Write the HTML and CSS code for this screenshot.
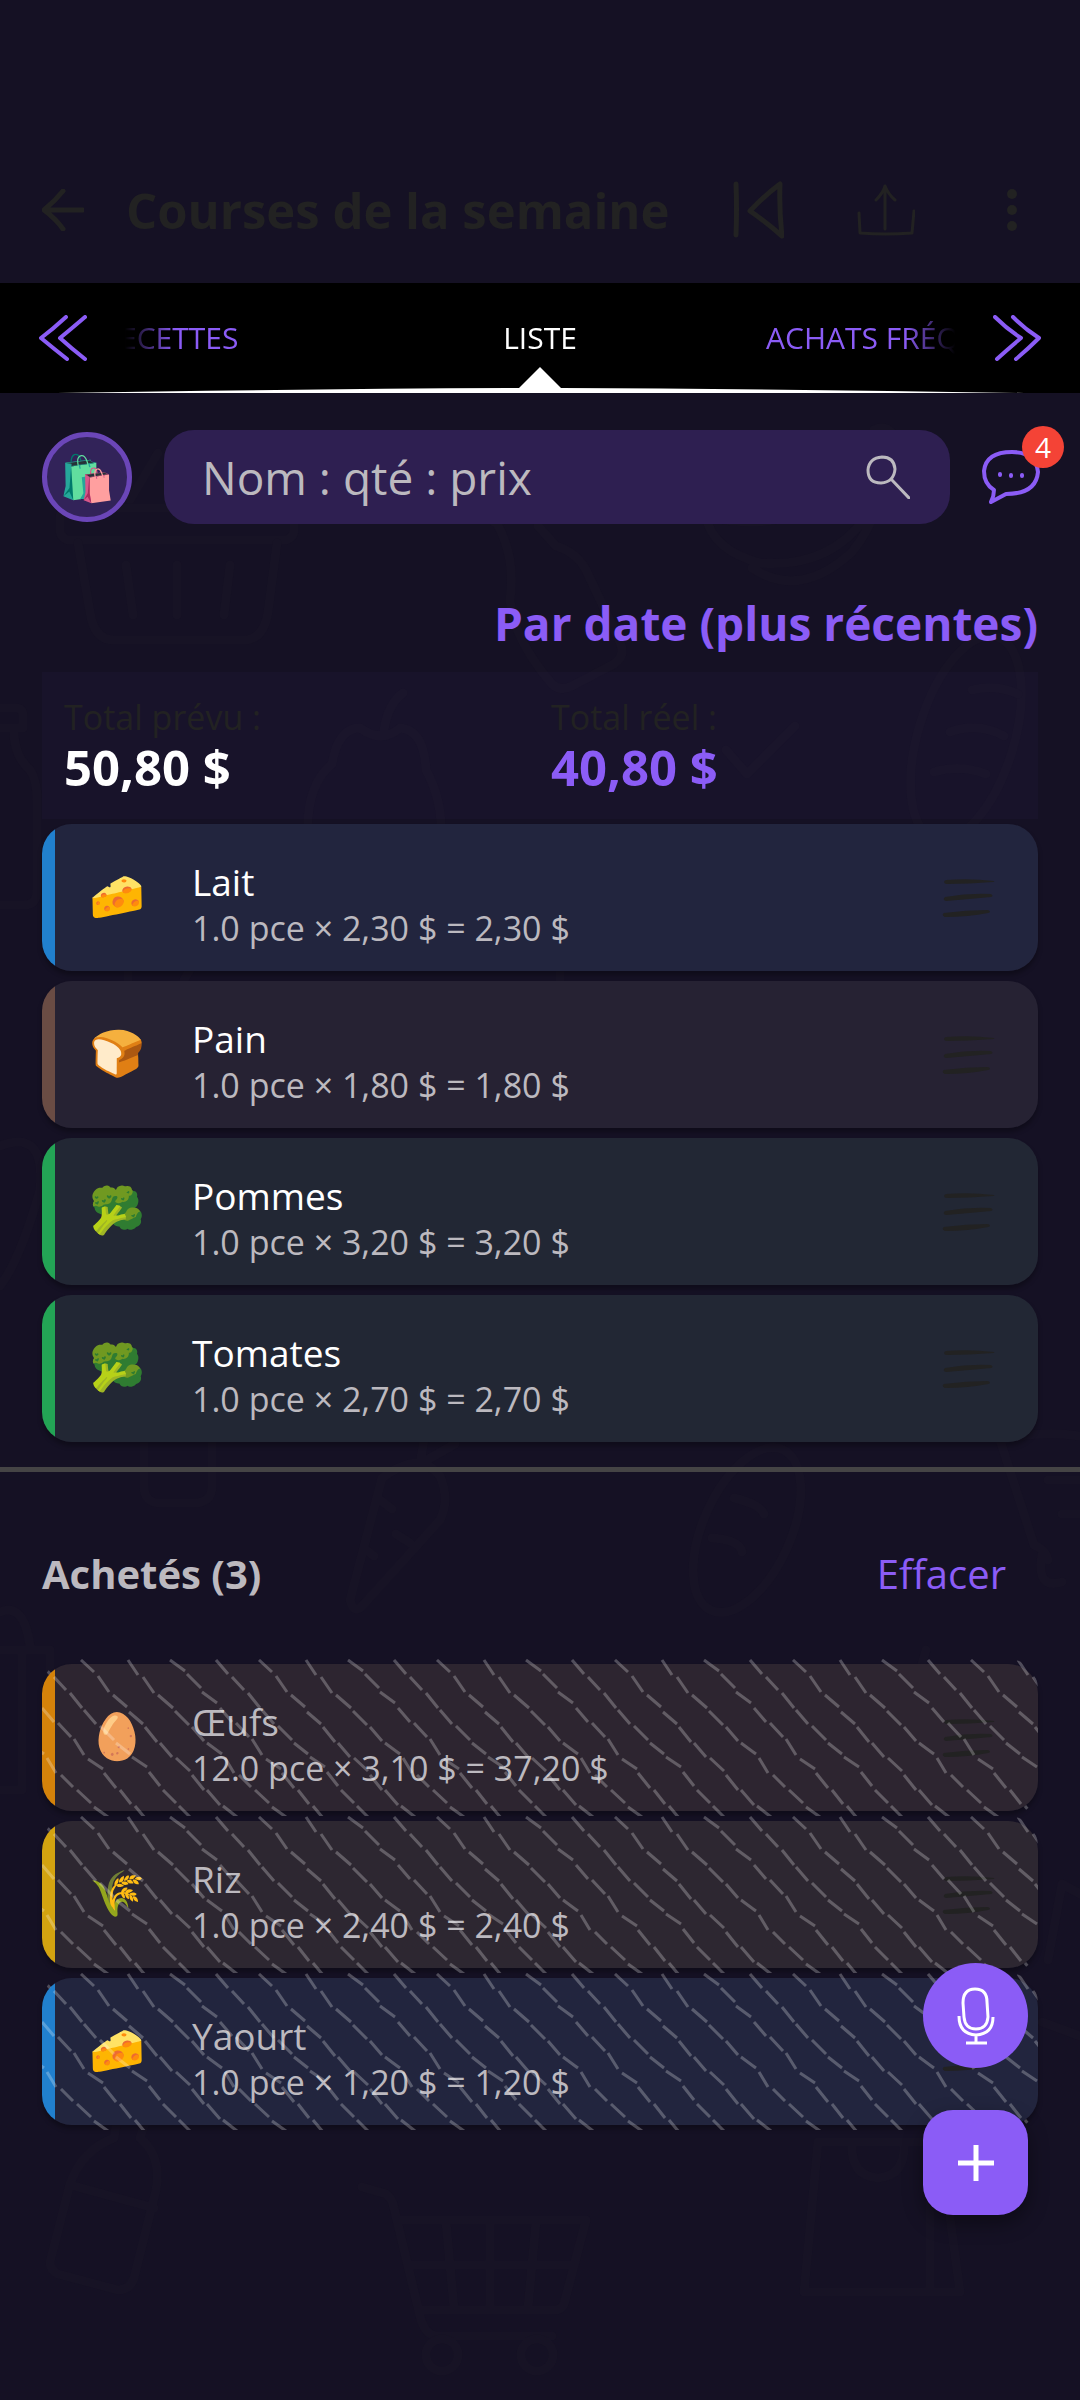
FILE: index.html
```html
<!DOCTYPE html>
<html lang="fr">
<head>
    <meta charset="UTF-8">
    <meta name="viewport" content="width=device-width, initial-scale=1.0">
    <title>Courses de la semaine</title>
    <link rel="stylesheet" href="styles.css">
</head>
<body>
    <!-- Shared icons -->
    <svg class="defs" width="0" height="0" aria-hidden="true">
        <symbol id="drag" viewBox="0 0 54 38">
            <path d="M4 1 Q28 -1 52 2 Q53 3 51 3 Q28 5 4 5 Q0 3 4 1Z M3 18 Q26 14 49 15 Q52 17 49 18 Q28 20 4 22 Q0 21 3 18Z M2 34 Q24 31 46 31 Q50 33 46 34 Q26 38 3 38 Q-1 36 2 34Z"/>
        </symbol>
        <pattern id="hatch" width="178" height="160" patternUnits="userSpaceOnUse">
            <g id="strokes">
                <path d="M39 1l13 12M56 17l11 16M71 36l14 12M87 53l14 12M103 68l12 15M118 84l12 14M134 99l14 13M150 116l12 15M165 131l13 15M181 147l14 11"/>
                <path d="M86 1l10 15M101 18l11 16M116 36l15 13M133 52l14 14M150 68l12 14M165 84l15 11M183 99l9 15M197 116l12 12M213 131l14 13M230 148l14 10"/>
                <path d="M128 1l15 11M145 15l14 14M160 33l15 11M178 49l12 14M194 64l13 14M210 80l10 16M224 100l15 10M240 114l12 15M256 131l11 14M271 147l10 12"/>
                <path d="M174 1l12 14M190 18l12 13M206 34l12 15M220 51l12 14M236 67l14 14M252 84l14 11M268 98l15 10M285 113l11 14M299 131l13 13M315 147l12 12"/>
            </g>
            <use href="#strokes" x="-178"/>
            <use href="#strokes" x="-356"/>
        </pattern>
    </svg>

    <svg class="doodles" viewBox="0 0 1080 2400" preserveAspectRatio="xMidYMin slice" aria-hidden="true">
        <!-- basket -->
        <path d="M158 453L130 500M198 453L236 505"/>
        <rect x="60" y="508" width="234" height="32" rx="10"/>
        <path d="M78 543L90 612Q94 640 114 640H246Q264 638 268 612L277 543M126 565L133 615M177 565V615M230 565L224 615"/>
        <!-- sauce bottle -->
        <path d="M486 506L526 486L534 512L494 522ZM496 522Q516 556 510 600Q514 640 552 684Q560 692 572 686L614 664Q626 656 620 642L586 570Q576 552 556 546L538 526"/>
        <!-- banana -->
        <path d="M706 516Q800 540 850 468Q872 440 874 430Q888 422 898 442Q884 460 886 480Q850 570 760 563Q712 550 706 516ZM752 568Q800 600 852 552Q886 510 880 460"/>
        <!-- bottle on the left edge -->
        <path d="M-10 708H16Q23 708 23 716V728H-10M14 732Q14 756 30 770Q37 780 37 800V890Q37 905 24 905H-10"/>
        <!-- pepper -->
        <path d="M403 693Q388 704 384 730M310 860Q300 790 332 764Q338 728 360 728Q382 744 400 728Q424 730 426 770Q448 810 438 860M128 966V980M192 966L184 980M560 966V980"/>
        <!-- tick and loaf -->
        <path d="M726 750L747 774L795 726"/>
        <ellipse cx="966" cy="738" rx="48" ry="106" transform="rotate(17 966 738)"/>
        <path d="M972 690Q996 684 1018 694M950 732Q978 722 1004 736M934 772Q960 764 986 774"/>
        <!-- leaf, milk and carrot -->
        <path d="M0 1146Q46 1128 40 1190Q20 1260 0 1286"/>
        <path d="M144 1440V1486Q144 1503 160 1503H194Q212 1503 212 1486V1440"/>
        <path d="M424 1440L420 1464L455 1444M382 1478Q420 1450 440 1476Q450 1500 440 1520L364 1604Q354 1616 350 1600Q366 1540 382 1478ZM380 1500L392 1509M396 1534L410 1543M366 1550L374 1556"/>
        <!-- baguette -->
        <ellipse cx="747" cy="1530" rx="44" ry="88" transform="rotate(24 747 1530)"/>
        <path d="M734 1498Q760 1504 764 1514M712 1538Q740 1540 742 1552"/>
        <!-- right edge -->
        <path d="M1000 1440L1034 1545Q1046 1550 1048 1560M1042 1555Q1036 1590 1062 1582M1080 1480H1048M1080 1514H1062M1000 1440Q1040 1430 1080 1436"/>
        <!-- gift -->
        <path d="M0 1612Q24 1602 30 1646M0 1650H50V1690M22 1650V1790H0"/>
        <path d="M922 1664L926 1650M1048 1960L1062 1884L1080 1894M1042 2022L1080 2036"/>
        <!-- bottle -->
        <path d="M116 2126L114 2138Q82 2150 70 2184L50 2262Q50 2270 58 2274L118 2290Q130 2290 134 2278L156 2190Q162 2156 140 2138L144 2126M74 2186L154 2208"/>
        <!-- cart -->
        <path d="M362 2187L386 2194Q392 2198 394 2208L420 2316Q424 2334 436 2336H552M398 2220H586L564 2304Q562 2310 554 2310H420M446 2222L454 2308M490 2220V2308M536 2222L528 2308M408 2265H574"/>
        <circle cx="442" cy="2355" r="16"/>
        <circle cx="537" cy="2355" r="16"/>
        <!-- paper bag -->
        <path d="M818 2142H940L960 2292H804ZM852 2142Q850 2176 878 2178Q906 2176 904 2142M930 2200V2290"/>
    </svg>

    <header class="topbar">
        <button class="icon-btn" aria-label="Retour">
            <svg width="42" height="42" viewBox="0 0 42 42"><path d="M21 2Q13 12 2 21Q14 30 21 40M4 21H41" stroke-width="5"/></svg>
        </button>
        <h1>Courses de la semaine</h1>
        <button class="icon-btn" aria-label="Revenir au début">
            <svg width="52" height="60" viewBox="0 0 52 60"><path d="M4 4Q5 28 4 55M48 4Q47 30 50 56Q34 42 18 31Q32 16 48 4Z" stroke-width="5"/></svg>
        </button>
        <button class="icon-btn" aria-label="Partager">
            <svg width="58" height="54" viewBox="0 0 58 54"><path d="M2 30L3 50Q28 52 55 50L57 28M28 46V3M19 17Q26 10 28 3Q31 11 38 17" stroke-width="3"/></svg>
        </button>
        <button class="icon-btn" aria-label="Plus d'options">
            <svg class="dots" width="12" height="44" viewBox="0 0 12 44"><circle cx="6" cy="6" r="5"/><circle cx="6" cy="22" r="5"/><circle cx="6" cy="38" r="5"/></svg>
        </button>
    </header>

    <nav class="tabs">
        <div class="tab-strip">
            <a href="#recettes" class="tab tab-prev">RECETTES</a>
            <a href="#liste" class="tab active">LISTE</a>
            <a href="#achats" class="tab tab-next">ACHATS FRÉQUENTS</a>
        </div>
        <button class="chevron left" aria-label="Onglet précédent">
            <svg width="48" height="46" viewBox="0 0 48 46"><path d="M27 2Q14 14 2 23Q14 33 28 44M46 2Q32 14 21 23Q32 33 46 44"/></svg>
        </button>
        <button class="chevron right" aria-label="Onglet suivant">
            <svg width="48" height="46" viewBox="0 0 48 46"><path d="M2 2Q14 14 28 23Q16 33 4 44M20 2Q32 14 46 23Q36 33 23 44"/></svg>
        </button>
        <svg class="tab-marker" viewBox="0 0 1080 26" preserveAspectRatio="none" aria-hidden="true"><path d="M57 26Q300 22 519 21L540 0L561 21Q780 22 1024 26Z"/></svg>
    </nav>

    <main>
        <div class="search-row">
            <button class="avatar" aria-label="Changer de liste">🛍️</button>
            <div class="search">
                <input type="text" placeholder="Nom : qté : prix" aria-label="Ajouter un article">
                <svg width="44" height="44" viewBox="0 0 44 44"><path d="M16 2Q28 2 29 14Q28 27 15 28Q2 28 2 15Q3 3 16 2ZM25 24L43 43"/></svg>
            </div>
            <button class="chat" aria-label="Messages">
                <svg width="58" height="54" viewBox="0 0 58 54">
                    <path d="M30 2Q54 2 56 22Q54 44 24 44L9 52Q12 46 12 40Q2 34 2 21Q4 2 30 2Z"/>
                    <path d="M18 24v1M29 25v1M40 25v1"/>
                </svg>
                <span class="badge">4</span>
            </button>
        </div>

        <button class="sort">Par date (plus récentes)</button>

        <div class="summary">
            <div>
                <div class="label">Total prévu :</div>
                <div class="amount">50,80 $</div>
            </div>
            <div>
                <div class="label">Total réel :</div>
                <div class="amount real">40,80 $</div>
            </div>
        </div>

        <ul class="list">
            <li class="item dairy">
                <span class="emoji">🧀</span>
                <div class="text"><div class="name">Lait</div><div class="detail">1.0 pce × 2,30 $ = 2,30 $</div></div>
                <svg class="drag"><use href="#drag"/></svg>
            </li>
            <li class="item bakery">
                <span class="emoji">🍞</span>
                <div class="text"><div class="name">Pain</div><div class="detail">1.0 pce × 1,80 $ = 1,80 $</div></div>
                <svg class="drag"><use href="#drag"/></svg>
            </li>
            <li class="item produce">
                <span class="emoji">🥦</span>
                <div class="text"><div class="name">Pommes</div><div class="detail">1.0 pce × 3,20 $ = 3,20 $</div></div>
                <svg class="drag"><use href="#drag"/></svg>
            </li>
            <li class="item produce">
                <span class="emoji">🥦</span>
                <div class="text"><div class="name">Tomates</div><div class="detail">1.0 pce × 2,70 $ = 2,70 $</div></div>
                <svg class="drag"><use href="#drag"/></svg>
            </li>
        </ul>

        <hr>

        <div class="bought-head">
            <h2>Achetés (3)</h2>
            <button class="clear">Effacer</button>
        </div>

        <ul class="list bought">
            <li class="item eggs">
                <span class="emoji">🥚</span>
                <div class="text"><div class="name">Œufs</div><div class="detail">12.0 pce × 3,10 $ = 37,20 $</div></div>
                <svg class="drag"><use href="#drag"/></svg>
                <svg class="hatch" aria-hidden="true"><rect width="100%" height="100%" fill="url(#hatch)"/></svg>
            </li>
            <li class="item cereal">
                <span class="emoji">🌾</span>
                <div class="text"><div class="name">Riz</div><div class="detail">1.0 pce × 2,40 $ = 2,40 $</div></div>
                <svg class="drag"><use href="#drag"/></svg>
                <svg class="hatch" aria-hidden="true"><rect width="100%" height="100%" fill="url(#hatch)"/></svg>
            </li>
            <li class="item dairy">
                <span class="emoji">🧀</span>
                <div class="text"><div class="name">Yaourt</div><div class="detail">1.0 pce × 1,20 $ = 1,20 $</div></div>
                <svg class="drag"><use href="#drag"/></svg>
                <svg class="hatch" aria-hidden="true"><rect width="100%" height="100%" fill="url(#hatch)"/></svg>
            </li>
        </ul>
    </main>

    <div class="fabs">
        <button class="fab mic" aria-label="Dicter">
            <svg width="38" height="58" viewBox="0 0 38 58"><path d="M18 2Q30 2 30 15L31 30Q30 42 19 42Q8 42 7 30L6 16Q6 2 18 2ZM2 29Q2 47 19 48Q36 47 36 30M19 48V55M9 56H30"/></svg>
        </button>
        <button class="fab add" aria-label="Ajouter">
            <svg width="38" height="38" viewBox="0 0 38 38"><path d="M19 1V37M1 19H37" stroke-width="5"/></svg>
        </button>
    </div>
</body>
</html>
```
FILE: styles.css
```css
* {
    box-sizing: border-box;
}
body {
    margin: 0;
    min-height: 100vh;
    position: relative;
    background-color: #151124;
    color: #fff;
    font-family: "Open Sans", "Noto Sans", sans-serif;
}
button {
    padding: 0;
    border: none;
    background: none;
    color: inherit;
    font-family: inherit;
    cursor: pointer;
}
h1, h2, ul {
    margin: 0;
    padding: 0;
}
svg {
    display: block;
    fill: none;
    stroke-linecap: round;
    stroke-linejoin: round;
}
.defs {
    position: absolute;
}
.doodles {
    position: absolute;
    top: 0;
    left: 0;
    width: 100%;
    height: 100%;
    z-index: -1;
    stroke: #171325;
    stroke-width: 9;
}

/* Top bar */
.topbar {
    display: flex;
    align-items: center;
    height: 283px;
    padding: 136px 62px 0 42px;
    color: #222;
}
.topbar svg {
    stroke: #222;
}
.topbar .dots {
    fill: #222;
    stroke: none;
}
.topbar h1 {
    flex: 1;
    margin-left: 42px;
    font-size: 49px;
    line-height: 60px;
    white-space: nowrap;
}
.icon-btn + .icon-btn {
    margin-left: 73px;
}
.icon-btn:last-child {
    margin-left: 91px;
}

/* Tabs */
.tabs {
    position: relative;
    height: 110px;
    background-color: #000;
}
.tab-strip {
    display: grid;
    grid-template-columns: repeat(3, 1fr);
    height: 100%;
    align-items: center;
    -webkit-mask-image: linear-gradient(to right, transparent 125px, #000 175px, #000 calc(100% - 175px), transparent calc(100% - 125px));
    mask-image: linear-gradient(to right, transparent 125px, #000 175px, #000 calc(100% - 175px), transparent calc(100% - 125px));
}
.tab {
    color: #8b5cf6;
    font-size: 30px;
    line-height: 40px;
    text-align: center;
    text-decoration: none;
    white-space: nowrap;
}
.tab-prev {
    padding-right: 20px;
}
.tab-next {
    padding-left: 20px;
}
.tab.active {
    color: #fff;
}
.chevron {
    position: absolute;
    top: 32px;
}
.chevron svg {
    stroke: #8b5cf6;
    stroke-width: 4;
}
.chevron.left {
    left: 39px;
}
.chevron.right {
    right: 39px;
}
.tab-marker {
    position: absolute;
    left: 0;
    bottom: 0;
    width: 100%;
    height: 26px;
    fill: #fff;
}

/* Search */
main {
    padding-top: 37px;
}
.search-row {
    display: flex;
    align-items: center;
    gap: 32px;
    padding: 0 40px 0 42px;
}
.avatar {
    width: 90px;
    height: 90px;
    border: 5px solid #6b46b8;
    border-radius: 50%;
    background-color: #322359;
    font-size: 45px;
    line-height: 76px;
}
.search {
    display: flex;
    align-items: center;
    flex: 1;
    height: 94px;
    padding: 0 40px 0 36px;
    border-radius: 30px;
    background-color: #2e1f51;
}
.search input {
    flex: 1;
    min-width: 0;
    border: none;
    outline: none;
    background: none;
    color: #fff;
    font-family: inherit;
    font-size: 46px;
}
.search input::placeholder {
    color: #bcb9bf;
    opacity: 1;
}
.search svg {
    stroke: #bcb9bf;
    stroke-width: 3;
}
.chat {
    position: relative;
}
.chat svg {
    stroke: #8b5cf6;
    stroke-width: 4;
}
.badge {
    position: absolute;
    top: -24px;
    right: -24px;
    width: 42px;
    height: 42px;
    border-radius: 50%;
    background-color: #f44336;
    color: #fff;
    font-size: 28px;
    line-height: 42px;
}
.sort {
    display: block;
    margin: 69px 42px 0 auto;
    color: #8b5cf6;
    font-size: 46px;
    font-weight: bold;
    line-height: 60px;
}

/* Totals */
.summary {
    display: grid;
    grid-template-columns: 1fr 1fr;
    column-gap: 22px;
    margin: 19px 42px 5px;
    padding: 23px 22px 24px;
    background-color: rgba(139, 92, 246, 0.03);
}
.label {
    color: #222;
    font-size: 34px;
    line-height: 44px;
}
.amount {
    font-size: 49px;
    font-weight: bold;
    line-height: 56px;
}
.amount.real {
    color: #8b5cf6;
}

/* Items */
.list {
    display: flex;
    flex-direction: column;
    gap: 10px;
    padding: 0 42px;
    list-style: none;
}
.item {
    position: relative;
    display: flex;
    align-items: center;
    min-height: 147px;
    padding-right: 42px;
    border-radius: 30px;
    box-shadow: 0 4px 5px rgba(0, 0, 0, 0.3);
}
.emoji {
    width: 150px;
    padding-bottom: 5px;
    font-size: 45px;
    line-height: 60px;
    text-align: center;
}
.text {
    flex: 1;
    padding: 34px 0 21px;
}
.name {
    font-size: 37px;
    line-height: 48px;
}
.detail {
    color: #bcb9bf;
    font-size: 34px;
    line-height: 44px;
}
.drag {
    width: 54px;
    height: 38px;
    fill: #222;
}
.dairy {
    background: linear-gradient(to right, #2180ce 13px, #22253e 13px);
}
.bakery {
    background: linear-gradient(to right, #6a4c44 13px, #262233 13px);
}
.produce {
    background: linear-gradient(to right, #23a455 13px, #222734 13px);
}
.eggs {
    background: linear-gradient(to right, #d4820a 13px, #2d2530 13px);
}
.cereal {
    background: linear-gradient(to right, #d3a310 13px, #2d2731 13px);
}
hr {
    height: 5px;
    margin: 25px 0 0;
    border: none;
    background-color: #454445;
}

/* Bought items */
.bought-head {
    display: flex;
    align-items: center;
    justify-content: space-between;
    height: 192px;
    padding: 12px 74px 0 42px;
}
.bought-head h2 {
    color: #bcb9bf;
    font-size: 40px;
    line-height: 60px;
}
.clear {
    color: #8b5cf6;
    font-size: 40px;
    line-height: 60px;
}
.bought .name {
    color: #bcb9bf;
}
.hatch {
    position: absolute;
    top: -5px;
    left: 0;
    width: 100%;
    height: 157px;
    border-radius: 30px;
    overflow: hidden;
}
#strokes {
    stroke: rgba(255, 255, 255, 0.25);
    stroke-width: 3;
    stroke-linecap: butt;
}

/* Floating buttons */
.fabs {
    position: fixed;
    right: 52px;
    bottom: 185px;
    display: flex;
    flex-direction: column;
    gap: 42px;
}
.fab {
    display: flex;
    align-items: center;
    justify-content: center;
    width: 105px;
    height: 105px;
    background-color: #8b5cf6;
}
.fab svg {
    stroke: #fff;
    stroke-width: 3;
    stroke-linecap: butt;
}
.mic {
    border-radius: 50%;
}
.add {
    border-radius: 30px;
    box-shadow: 0 8px 20px rgba(0, 0, 0, 0.4);
}
```
